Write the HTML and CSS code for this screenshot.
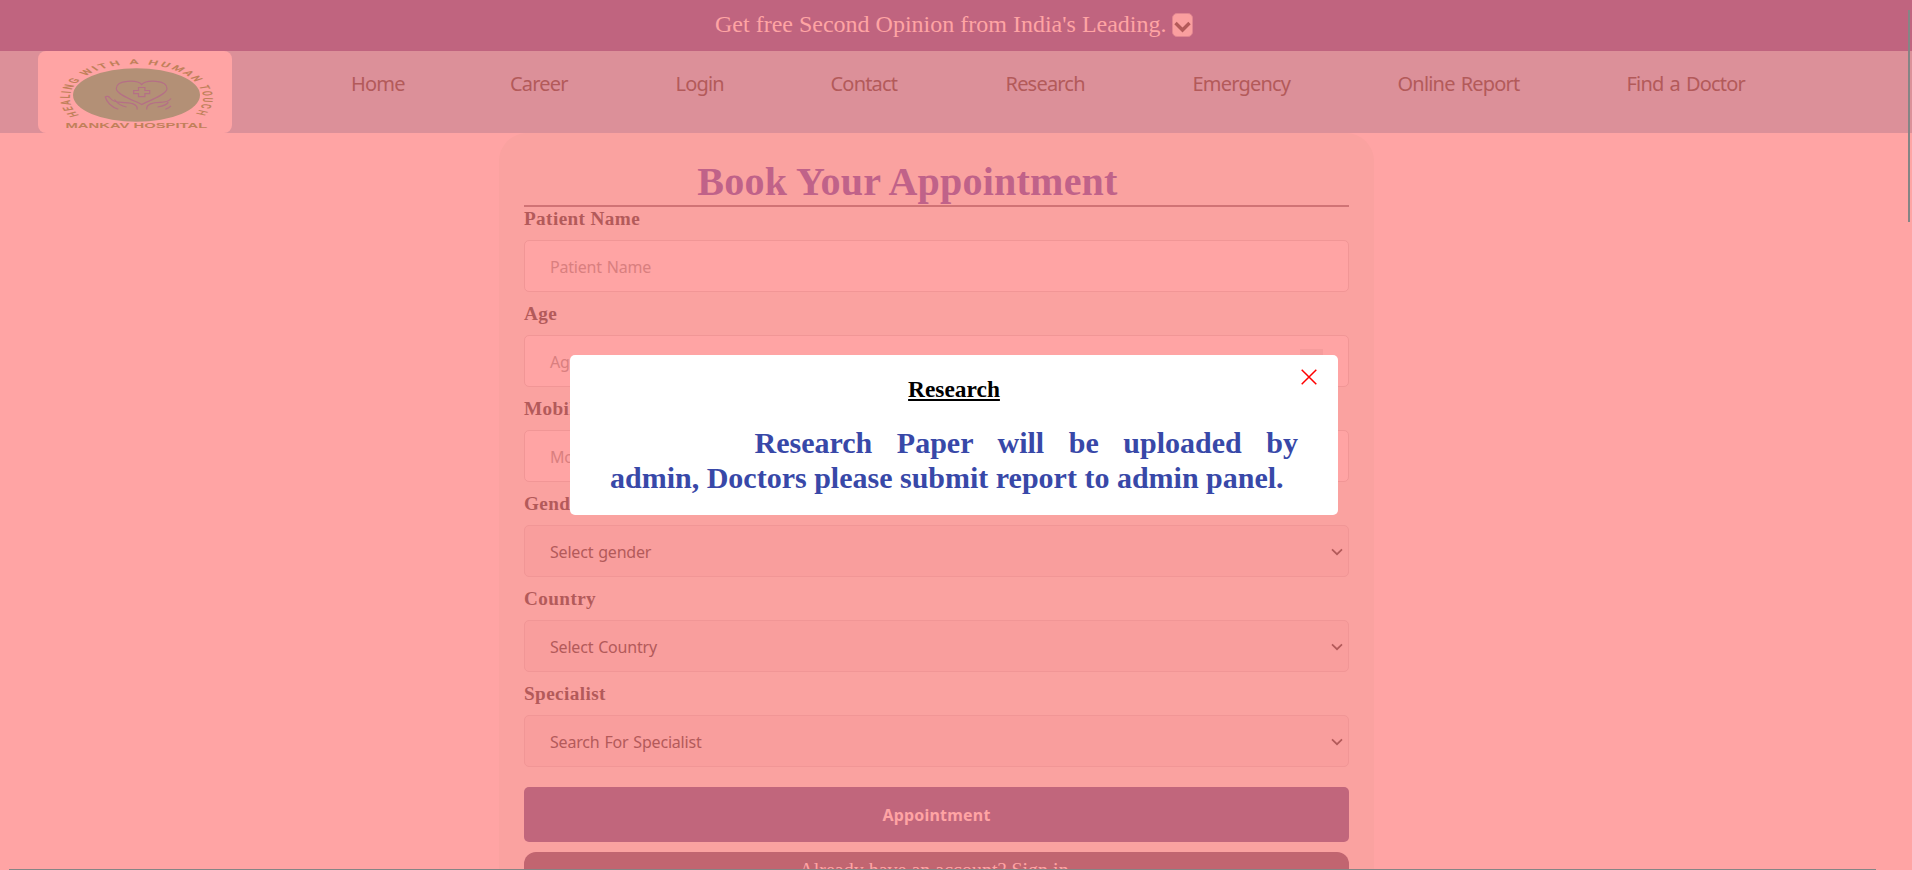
FILE: index.html
```html
<!DOCTYPE html>
<html lang="en">
<head>
<meta charset="utf-8">
<title>Mankav Hospital</title>
<link rel="stylesheet" href="styles.css">
</head>
<body>
<header class="topbar">
  <span>Get free Second Opinion from India's Leading.</span>
  <button class="toggle" aria-label="Open"><svg width="17" height="12" viewBox="0 0 17 12"><path d="M1.500 2 8.500 9 15.500 2"/></svg></button>
</header>
<nav class="nav">
  <div class="logo">
    <svg width="194" height="82" viewBox="38 51 194 82">
      <ellipse cx="136.5" cy="95" rx="63.5" ry="26.8" fill="#b39076"/>
      <g transform="translate(136.5 98) scale(1.96 1)">
        <path id="arc" fill="none" d="M-29.2 17.5A34 34 0 1 1 29.2 17.500"/>
        <text class="logo-arc"><textPath href="#arc" textLength="141">HEALING WITH A HUMAN TOUCH</textPath></text>
      </g>
      <text class="logo-name" transform="translate(65.5 128) scale(1.75 1)" textLength="81" lengthAdjust="spacingAndGlyphs">MANKAV HOSPITAL</text>
      <g class="logo-mark">
        <path d="M141.7 104.5C137 101.5 116.3 95 116.3 88.5C116.3 79.5 137.5 79.7 141.7 84.5C146 79.7 167 79.5 167 88.5C167 95 146.5 101.5 141.7 104.5Z"/>
        <path d="M138.500 87.500h6.400v3h4.800v3.200h-4.800v3h-6.400v-3h-4.800v-3.200h4.800z"/>
        <path d="M118.3 109.3C111 107 106.500 101.500 105.300 97C107 95.500 109 96.500 110.500 98.500C113 101.700 117 102.300 121.500 102.300C130 102.300 138.500 104 137 109.500M114.500 99.500C117 103 121 106 126.500 107"/>
        <path d="M146.700 109.500C146 104 153 102.300 160 102.300C165.500 102.300 169.500 100.800 171 98.500M157.500 107C163 106 167.500 104.500 168.300 102M165.300 109.300C167.500 108.500 169.500 107.500 171 106"/>
      </g>
    </svg>
  </div>
  <ul class="links">
    <li class="w-home">Home</li><li class="w-career">Career</li><li class="w-login">Login</li><li class="w-contact">Contact</li><li class="w-research">Research</li><li class="w-emergency">Emergency</li><li class="w-report">Online Report</li><li>Find a Doctor</li>
  </ul>
</nav>
<main class="panel">
  <h1 class="title">Book Your Appointment</h1>
  <form class="form">
    <div class="field"><label>Patient Name</label><div class="control input">Patient Name</div></div>
    <div class="field"><label>Age</label><div class="control input">Age<span class="spinner"></span></div></div>
    <div class="field"><label>Mobile</label><div class="control input">Mobile</div></div>
    <div class="field"><label>Gender</label><div class="control select">Select gender<svg width="12" height="8" viewBox="0 0 12 8"><path d="M1 1.300 6 6.200 11 1.300"/></svg></div></div>
    <div class="field"><label>Country</label><div class="control select">Select Country<svg width="12" height="8" viewBox="0 0 12 8"><path d="M1 1.300 6 6.200 11 1.300"/></svg></div></div>
    <div class="field"><label>Specialist</label><div class="control select">Search For Specialist<svg width="12" height="8" viewBox="0 0 12 8"><path d="M1 1.300 6 6.200 11 1.300"/></svg></div></div>
    <button type="button" class="submit">Appointment</button>
    <div class="signin">Already have an account? Sign in</div>
  </form>
</main>
<section class="modal">
  <svg class="close" width="16" height="16" viewBox="0 0 16 16"><path d="M.7.7 15.300 15.300M15.300.7.7 15.300"/></svg>
  <h3>Research</h3>
  <p>Research Paper will be uploaded by admin, Doctors please submit report to admin panel.</p>
</section>
<div class="scroll-y"></div>
<div class="scroll-x"></div>
</body>
</html>
```
FILE: styles.css
```css
* { box-sizing: border-box; }
body {
  position: relative;
  margin: 0;
  height: 870px;
  overflow: hidden;
  background: #ffa4a4;
  color: #b35a5a;
  font: 20px "Liberation Serif", "Times New Roman", serif;
}
.topbar {
  display: flex;
  align-items: center;
  height: 51px;
  padding: 0 0 2px 715px;
  gap: 5px;
  background: #c0647f;
  color: #ffa4a4;
  font-size: 24px;
}
.toggle {
  display: flex;
  align-items: center;
  justify-content: center;
  width: 21px;
  height: 24px;
  padding: 4px 0 0;
  border: 1px solid #e08590;
  border-radius: 5px;
  background: #fa9f9f;
}
.toggle svg { flex: none; }
.toggle path { fill: none; stroke: #b35a5a; stroke-width: 3.4; }
.nav {
  display: flex;
  height: 82px;
  padding-left: 38px;
  background: #dc9099;
}
.logo {
  width: 194px;
  height: 82px;
  border-radius: 8px;
  background: #ffa4a4;
}
.logo svg { display: block; }
.logo-arc { font: 700 7px Roboto, sans-serif; fill: #c1805a; }
.logo-name { font: 700 7px "Liberation Sans", sans-serif; fill: #c1805a; }
.logo-mark path { fill: none; stroke: #b56f86; stroke-width: 1.2; }
.links {
  display: flex;
  margin: 0;
  padding: 19px 0 0 119px;
  list-style: none;
  font: 20px/28px "Noto Sans", sans-serif;
  letter-spacing: -0.8px;
  word-spacing: 1.6px;
  white-space: nowrap;
}
.w-home { width: 159px; }
.w-career { width: 165.5px; }
.w-login { width: 155px; }
.w-contact { width: 175px; }
.w-research { width: 187px; }
.w-emergency { width: 205px; }
.w-report { width: 229px; }
.panel {
  width: 875px;
  height: 737px;
  margin-left: 499px;
  padding: 26px 25px 0;
  border-radius: 28px 28px 0 0;
  background: #faa2a0;
}
.title {
  height: 48px;
  margin: 0;
  padding-right: 58px;
  border-bottom: 2px solid #d07375;
  color: #c06289;
  font-size: 40px;
  letter-spacing: 0.22px;
  line-height: 46px;
  text-align: center;
}
.field { display: flex; flex-direction: column; height: 95px; }
.field label { height: 33px; font-size: 19.2px; font-weight: 700; letter-spacing: 0.4px; line-height: 23px; }
.control {
  position: relative;
  display: flex;
  align-items: center;
  justify-content: space-between;
  height: 52px;
  padding: 2px 5px 0 25px;
  border: 1px solid #f19696;
  border-radius: 5px;
  font: 16px "Noto Sans", sans-serif;
  letter-spacing: -0.2px;
  word-spacing: 1px;
}
.input { background: #ffa4a4; color: #d97f7f; }
.select { background: #f99e9d; }
.select path { fill: none; stroke: #b35a5a; stroke-width: 1.7; }
.spinner { width: 23px; height: 26px; margin-right: 20px; background: #f69c9c; }
.submit {
  display: block;
  width: 825px;
  height: 55px;
  margin: 10px 0;
  padding: 1px 0 0;
  border: 0;
  border-radius: 5px;
  background: #c1667c;
  color: #ffa4a4;
  font: 700 16px "Noto Sans", sans-serif;
  letter-spacing: 0.2px;
}
.signin {
  height: 18px;
  padding: 7px 5px 0 0;
  border-radius: 12px 12px 0 0;
  background: #c16570;
  color: #ffa4a4;
  text-align: center;
}
.modal {
  position: absolute;
  left: 570px;
  top: 355px;
  width: 768px;
  height: 160px;
  padding: 20px 40px 0;
  border-radius: 5px;
  background: #fff;
}
.modal h3 {
  margin: 0;
  color: #000;
  font-size: 23.4px;
  line-height: 29px;
  text-align: center;
  text-decoration: underline;
}
.modal p {
  margin: 21px 0 0;
  color: #3848a8;
  font-size: 30px;
  font-weight: 700;
  line-height: 35px;
  text-align: justify;
  text-indent: 144.5px;
}
.close { position: absolute; right: 21px; top: 13.500px; }
.close path { fill: none; stroke: #f00; stroke-width: 1.5; }
.scroll-y { position: absolute; right: 2px; top: 10px; width: 2px; height: 212px; background: #858585; }
.scroll-x { position: absolute; left: 9px; bottom: 0; width: 1867px; height: 1px; background: #858585; }
```
